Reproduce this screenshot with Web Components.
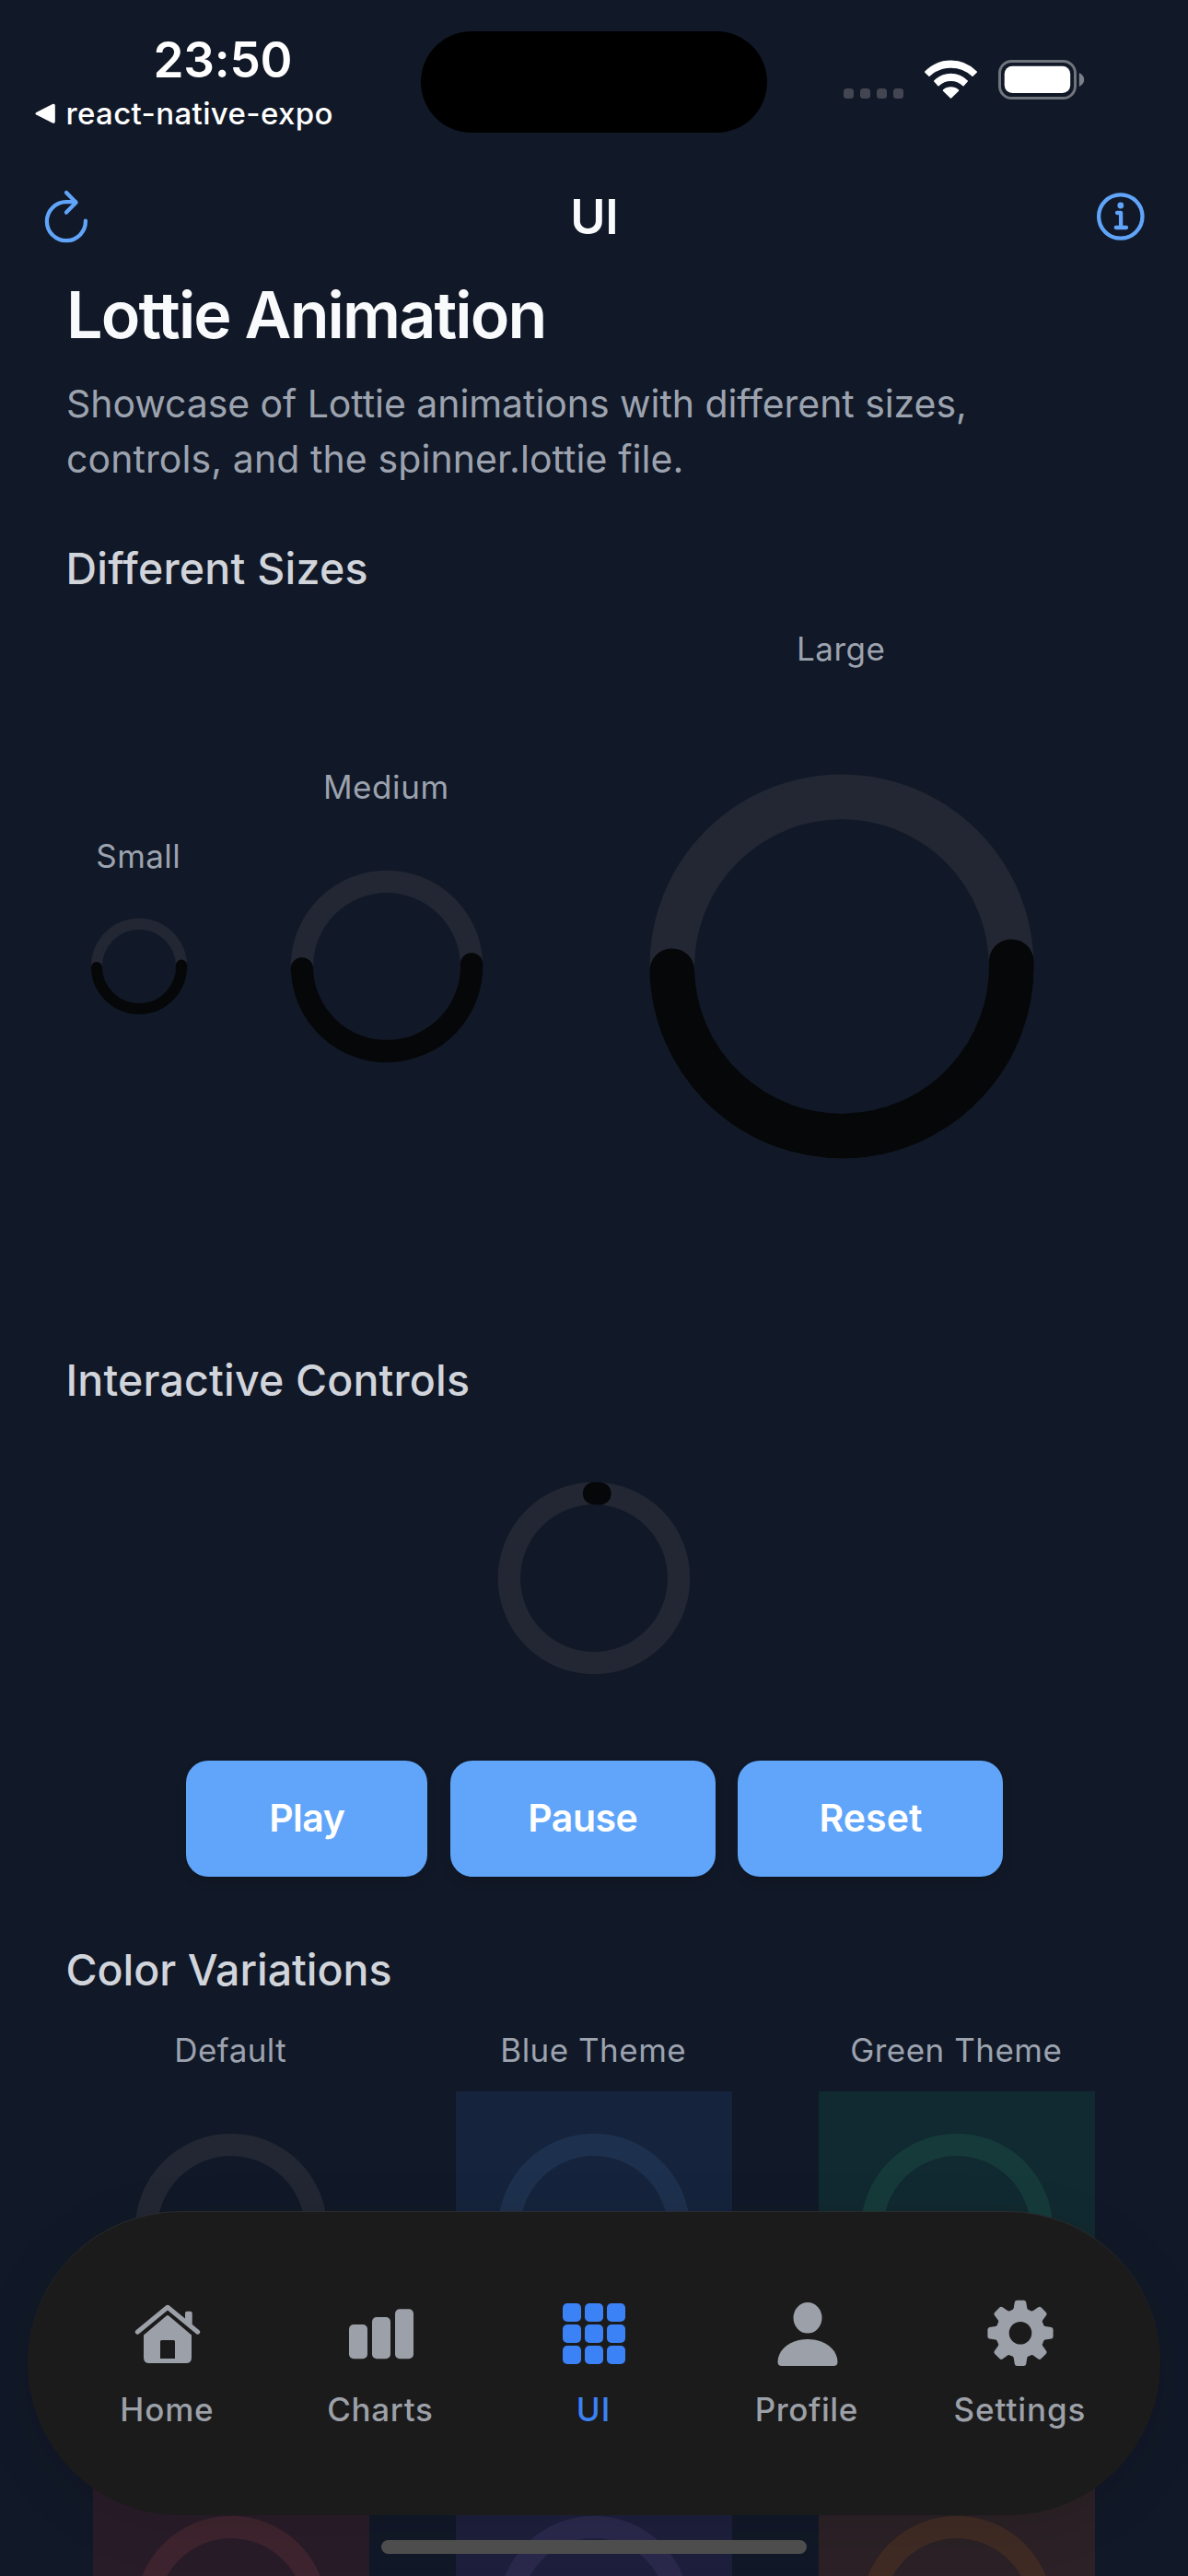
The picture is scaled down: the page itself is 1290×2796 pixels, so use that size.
<!DOCTYPE html>
<html lang="en">
<head>
<meta charset="utf-8">
<title>UI</title>
<style>
  html, body { margin: 0; padding: 0; background: #111827; }
  body { width: 1290px; height: 2796px; overflow: hidden; font-family: Inter, "Liberation Sans", sans-serif; }
</style>
</head>
<body>
<app-screen></app-screen>
<script>
const define = (name, html, ready) => {
  const tpl = document.createElement('template');
  tpl.innerHTML = html;
  customElements.define(name, class extends HTMLElement {
    connectedCallback() {
      if (this.shadowRoot) return;
      this.attachShadow({ mode: 'open' }).appendChild(tpl.content.cloneNode(true));
      if (ready) ready(this, this.shadowRoot);
    }
  });
};

/* Text with a fixed ink width: the tracking is derived from the font's own metrics. */
const ctx = document.createElement('canvas').getContext('2d');
define('fit-text', `<style>
  :host { display: block; white-space: nowrap; font-kerning: normal; }
</style><slot></slot>`, el => {
  const target = +el.getAttribute('ink');
  const text = el.textContent;
  const cs = getComputedStyle(el);
  ctx.font = `${cs.fontWeight} ${cs.fontSize} Inter`;
  const m = ctx.measureText(text);
  const ink = m.actualBoundingBoxRight + m.actualBoundingBoxLeft;
  const ls = (target - ink) / (text.length - 1);
  el.style.letterSpacing = ls.toFixed(3) + 'px';
  el.style.marginRight = (-ls).toFixed(3) + 'px';
});

define('status-bar', `<style>
  :host { display: flex; height: 177px; color: #fff; }
  .left { width: 457px; padding-top: 35px; box-sizing: border-box; }
  .time { font-size: 53px; line-height: 60px; font-weight: 600; margin-left: 166.5px; }
  .back { display: flex; align-items: center; gap: 11.5px; margin: 8px 0 0 38px; height: 40px; }
  .back fit-text { font-size: 33px; line-height: 40px; font-weight: 500; }
  .island { width: 376px; height: 110px; margin-top: 34px; border-radius: 55px; background: #000; }
  .right { display: flex; padding: 60px 0 0 83px; }
  svg { display: block; flex: none; }
  .wifi { margin-left: 22px; } .bat { margin-left: 21px; }
</style>
<div class="left">
  <div class="time"><fit-text ink="146">23:50</fit-text></div>
  <div class="back">
    <svg width="22" height="24" viewBox="38 111 22 24"><path d="M39.4 122 57 113.1Q59.8 112.1 59.8 114.6V132Q59.8 134.5 57 133.5L39.4 124.6Q37.4 123.3 39.4 122Z" fill="#fff"/></svg>
    <fit-text ink="287">react-native-expo</fit-text>
  </div>
</div>
<div class="island"></div>
<div class="right">
  <svg width="65" height="52" viewBox="916 60 65 52" fill="#434652"><rect x="916" y="96" width="11" height="11" rx="3.5"/><rect x="934" y="96" width="11" height="11" rx="3.5"/><rect x="952" y="96" width="11" height="11" rx="3.5"/><rect x="970" y="96" width="11" height="11" rx="3.5"/></svg>
  <svg class="wifi" width="59" height="52" viewBox="1003 60 59 52" fill="#fff" stroke="#fff" stroke-width="1.6" stroke-linejoin="round">
    <path d="M1004.8 78.4A38.6 38.6 0 0 1 1060.2 78.4L1056 82.4A34.5 34.5 0 0 0 1009 82.4Z" transform="translate(0 -.3)"/>
    <path d="M1014.8 88A24.5 24.5 0 0 1 1050.2 88L1046 92.6A19.5 19.5 0 0 0 1019 92.6Z"/>
    <path d="M1024.5 98.2A12 12 0 0 1 1040.5 98.2L1032.5 106Z"/></svg>
  <svg class="bat" width="96" height="52" viewBox="1083 60 96 52"><rect x="1085.5" y="66.5" width="82" height="40" rx="13" fill="none" stroke="#70747d" stroke-width="3"/><rect x="1090.7" y="71.7" width="71.5" height="29.3" rx="8.5" fill="#fff"/><path d="M1171.8 79C1179 82 1179 91 1171.8 94Z" fill="#7d8088"/></svg>
</div>`);

define('nav-header', `<style>
  :host { display: flex; justify-content: space-between; align-items: center; height: 116px; padding: 0 46px; color: #f9fafb; }
  svg { display: block; fill: none; stroke: #60a5fa; stroke-width: 4.3; stroke-linecap: round; stroke-linejoin: round; }
  h1 { margin: 0 0 0 1px; padding-top: 1px; font-size: 52px; line-height: 60px; font-weight: 600; }
</style>
<svg width="54" height="60" viewBox="46 205 54 60"><path d="M92.9 239.6A21 21 0 1 1 71.9 219.2H82"/><path d="M72 209 82.6 219.7 72 230.6"/></svg>
<h1><fit-text ink="46">UI</fit-text></h1>
<svg width="54" height="60" viewBox="1190 204 54 60"><circle cx="1216.8" cy="234" r="23.7"/><circle cx="1216.8" cy="222" r="3.4" fill="#60a5fa" stroke="none"/><path d="M1213 230H1217.1V246M1211.8 246H1223"/></svg>`);

/* Circular loader: box is 300 units, ring radius 92. */
define('lottie-ring', `<style>
  :host { display: block; background: var(--box, transparent); }
  svg { display: block; width: 100%; height: 100%; }
  circle { fill: none; stroke: var(--track, #222733); stroke-width: 24.4; }
  path { fill: none; stroke: #050709; stroke-width: 24.4; stroke-linecap: round; }
</style><svg viewBox="0 0 300 300"><circle cx="150" cy="150" r="92.1"/><path/></svg>`, (el, root) => {
  const s = el.getAttribute('size');
  el.style.width = el.style.height = s + 'px';
  const arc = { half: 'M242.1 147.4A92.1 92.1 0 1 1 57.9 152.4', start: 'M150 57.9A92.1 92.1 0 0 1 156.4 58.1' }[el.getAttribute('arc')];
  const p = root.querySelector('path');
  if (arc) p.setAttribute('d', arc); else p.remove();
});

define('demo-item', `<style>
  :host { display: flex; flex-direction: column; align-items: center; gap: 24px; color: #9ca3af; font-size: 35px; line-height: 42px; }
  ::slotted(fit-text) { transform: translateX(-1px); }
</style><slot></slot>`);

define('section-title', `<style>
  :host { display: flex; margin-left: -1.5px; color: #d1d5db; font-size: 46.5px; line-height: 60px; font-weight: 500; }
</style><slot></slot>`);

define('action-button', `<style>
  :host { display: block; }
  button { all: unset; box-sizing: border-box; display: flex; justify-content: center; width: 100%; height: 126px; padding: 32px 0 0 1px; border-radius: 24px; background: #60a5fa; color: #fff; font-size: 41px; line-height: 60px; font-weight: 600; box-shadow: 0 6px 12px rgba(0,0,0,.1); }
</style><button><slot></slot></button>`);

define('tab-item', `<style>
  :host { display: flex; flex-direction: column; align-items: center; width: 231.5px; color: #9ca0a8; font-size: 35px; line-height: 42px; font-weight: 500; }
  :host([active]) { color: #3b82f6; }
  ::slotted(svg) { display: block; fill: currentColor; margin-bottom: 22px; }
  ::slotted(fit-text) { transform: translateX(-1px); }
</style><slot></slot>`);

define('tab-bar', `<style>
  :host { position: absolute; left: 30px; top: 2400px; width: 1230px; height: 330px; box-sizing: border-box; display: flex; justify-content: center; padding-top: 91px; border-radius: 165px; border-top: 1px solid #2b2c2e; background: #1b1b1b; box-shadow: 0 12px 60px rgba(0,0,0,.1); }
</style>
<tab-item><svg width="80" height="80" viewBox="142 2492 80 80"><path d="M149.2 2531.2 182 2504.3 214.8 2531.2" fill="none" stroke="currentColor" stroke-width="5" stroke-linecap="round" stroke-linejoin="round"/><path d="M201 2517V2510.7Q201 2508.7 203 2508.7H206.6Q208.7 2508.7 208.7 2510.7V2526L201 2519.5Z"/><path fill-rule="evenodd" d="M180.8 2513.6Q182 2512.6 183.2 2513.6L208 2534.4V2559Q208 2565 202 2565H162Q156 2565 156 2559V2534.4ZM175.5 2540Q174 2540 174 2541.5V2560H190V2541.5Q190 2540 188.5 2540Z"/></svg><fit-text ink="97.7">Home</fit-text></tab-item>
<tab-item><svg width="80" height="80" viewBox="374 2492 80 80"><rect x="379" y="2523" width="20" height="37.3" rx="5"/><rect x="404" y="2515" width="20" height="45.3" rx="5"/><rect x="429" y="2506.3" width="20" height="54" rx="5"/></svg><fit-text ink="112.7">Charts</fit-text></tab-item>
<tab-item active><svg width="80" height="80" viewBox="605 2492 80 80"><g id="g"><rect x="611" y="2500" width="20" height="20" rx="5"/><rect x="635" y="2500" width="20" height="20" rx="5"/><rect x="659" y="2500" width="20" height="20" rx="5"/></g><use href="#g" y="23"/><use href="#g" y="46"/></svg><fit-text ink="32.2">UI</fit-text></tab-item>
<tab-item><svg width="80" height="80" viewBox="836.5 2492 80 80"><ellipse cx="876.5" cy="2515.8" rx="15.5" ry="16.8"/><path d="M848.5 2568Q844 2568 844 2563.5C844 2551 857 2539 876.5 2539S909 2551 909 2563.5Q909 2568 904.5 2568Z"/></svg><fit-text ink="108">Profile</fit-text></tab-item>
<tab-item><svg class="gear" width="80" height="80" viewBox="-40 -40.3 80 80"><path fill-rule="evenodd"/></svg><fit-text ink="141">Settings</fit-text></tab-item>`, (el, root) => {
  let d = '';
  for (let i = 0; i < 8; i++) {
    const a = i * Math.PI / 4;
    const p = (x, y) => (x * Math.cos(a) - y * Math.sin(a)).toFixed(2) + ' ' + (x * Math.sin(a) + y * Math.cos(a)).toFixed(2);
    d += `${i ? 'L' : 'M'}${p(-8.6, -25.2)}Q${p(-7.6, -25.8)} ${p(-7.3, -27)}L${p(-6.2, -33.6)}Q${p(-5.7, -35.6)} ${p(-3.6, -35.6)}L${p(3.6, -35.6)}Q${p(5.7, -35.6)} ${p(6.2, -33.6)}L${p(7.3, -27)}Q${p(7.6, -25.8)} ${p(8.6, -25.2)}L${p(11, -24.4)}`;
  }
  d += 'ZM12.3 0A12.3 12.3 0 1 0 -12.3 0A12.3 12.3 0 1 0 12.3 0Z';
  root.querySelector('.gear path').setAttribute('d', d);
});

define('app-screen', `<style>
  :host { display: block; position: relative; width: 1290px; height: 2796px; overflow: hidden; background: #111827; }
  main { padding: 6.5px 73px 0; }
  h2 { display: flex; margin: 0 0 0 -1px; color: #f9fafb; font-size: 70px; line-height: 84px; font-weight: 600; }
  .lead { display: flex; flex-direction: column; align-items: flex-start; margin: 24.5px 0 58.8px -1px; color: #9ca3af; font-size: 41px; line-height: 60px; }
  .sizes { display: flex; justify-content: center; align-items: center; gap: 44px; margin: 36.2px 0 119px; }
  .player { margin: 35px auto 48px; }
  .buttons { display: flex; justify-content: center; gap: 24.5px; margin: 0 0 71px 1px; }
  .themes { display: grid; grid-template-columns: repeat(3, 300px); column-gap: 94px; row-gap: 115px; justify-content: center; margin-top: 36px; }
  .blue { --box: #15233c; --track: #1d304d; }
  .green { --box: #112930; --track: #163a3a; }
  .red { --box: #291c29; --track: #3e242e; }
  .purple { --box: #1d1f3c; --track: #2a294c; }
  .orange { --box: #2b2126; --track: #3f2b24; }
  .home { position: absolute; left: 414px; top: 2757px; width: 462px; height: 15px; border-radius: 8px; background: #4d4d4d; }
</style>
<status-bar></status-bar>
<nav-header></nav-header>
<main>
  <h2><fit-text ink="513.5">Lottie Animation</fit-text></h2>
  <div class="lead"><fit-text ink="973">Showcase of Lottie animations with different sizes,</fit-text><fit-text ink="665.5">controls, and the spinner.lottie file.</fit-text></div>
  <section-title><fit-text ink="323">Different Sizes</fit-text></section-title>
  <div class="sizes">
    <demo-item><fit-text ink="88">Small</fit-text><lottie-ring size="150" arc="half"></lottie-ring></demo-item>
    <demo-item><fit-text ink="130.5">Medium</fit-text><lottie-ring size="300" arc="half"></lottie-ring></demo-item>
    <demo-item><fit-text ink="91.5">Large</fit-text><lottie-ring size="600" arc="half"></lottie-ring></demo-item>
  </div>
  <section-title><fit-text ink="433.5">Interactive Controls</fit-text></section-title>
  <lottie-ring class="player" size="300" arc="start"></lottie-ring>
  <div class="buttons">
    <action-button style="width:262px"><fit-text ink="79.5">Play</fit-text></action-button>
    <action-button style="width:288px"><fit-text ink="115.5">Pause</fit-text></action-button>
    <action-button style="width:288px"><fit-text ink="108.5">Reset</fit-text></action-button>
  </div>
  <section-title><fit-text ink="350">Color Variations</fit-text></section-title>
  <div class="themes">
    <demo-item><fit-text ink="118">Default</fit-text><lottie-ring size="300"></lottie-ring></demo-item>
    <demo-item><fit-text ink="197">Blue Theme</fit-text><lottie-ring class="blue" size="300"></lottie-ring></demo-item>
    <demo-item><fit-text ink="226.3">Green Theme</fit-text><lottie-ring class="green" size="300"></lottie-ring></demo-item>
    <lottie-ring class="red" size="300"></lottie-ring>
    <lottie-ring class="purple" size="300"></lottie-ring>
    <lottie-ring class="orange" size="300"></lottie-ring>
  </div>
</main>
<tab-bar></tab-bar>
<div class="home"></div>`);
</script>
</body>
</html>
